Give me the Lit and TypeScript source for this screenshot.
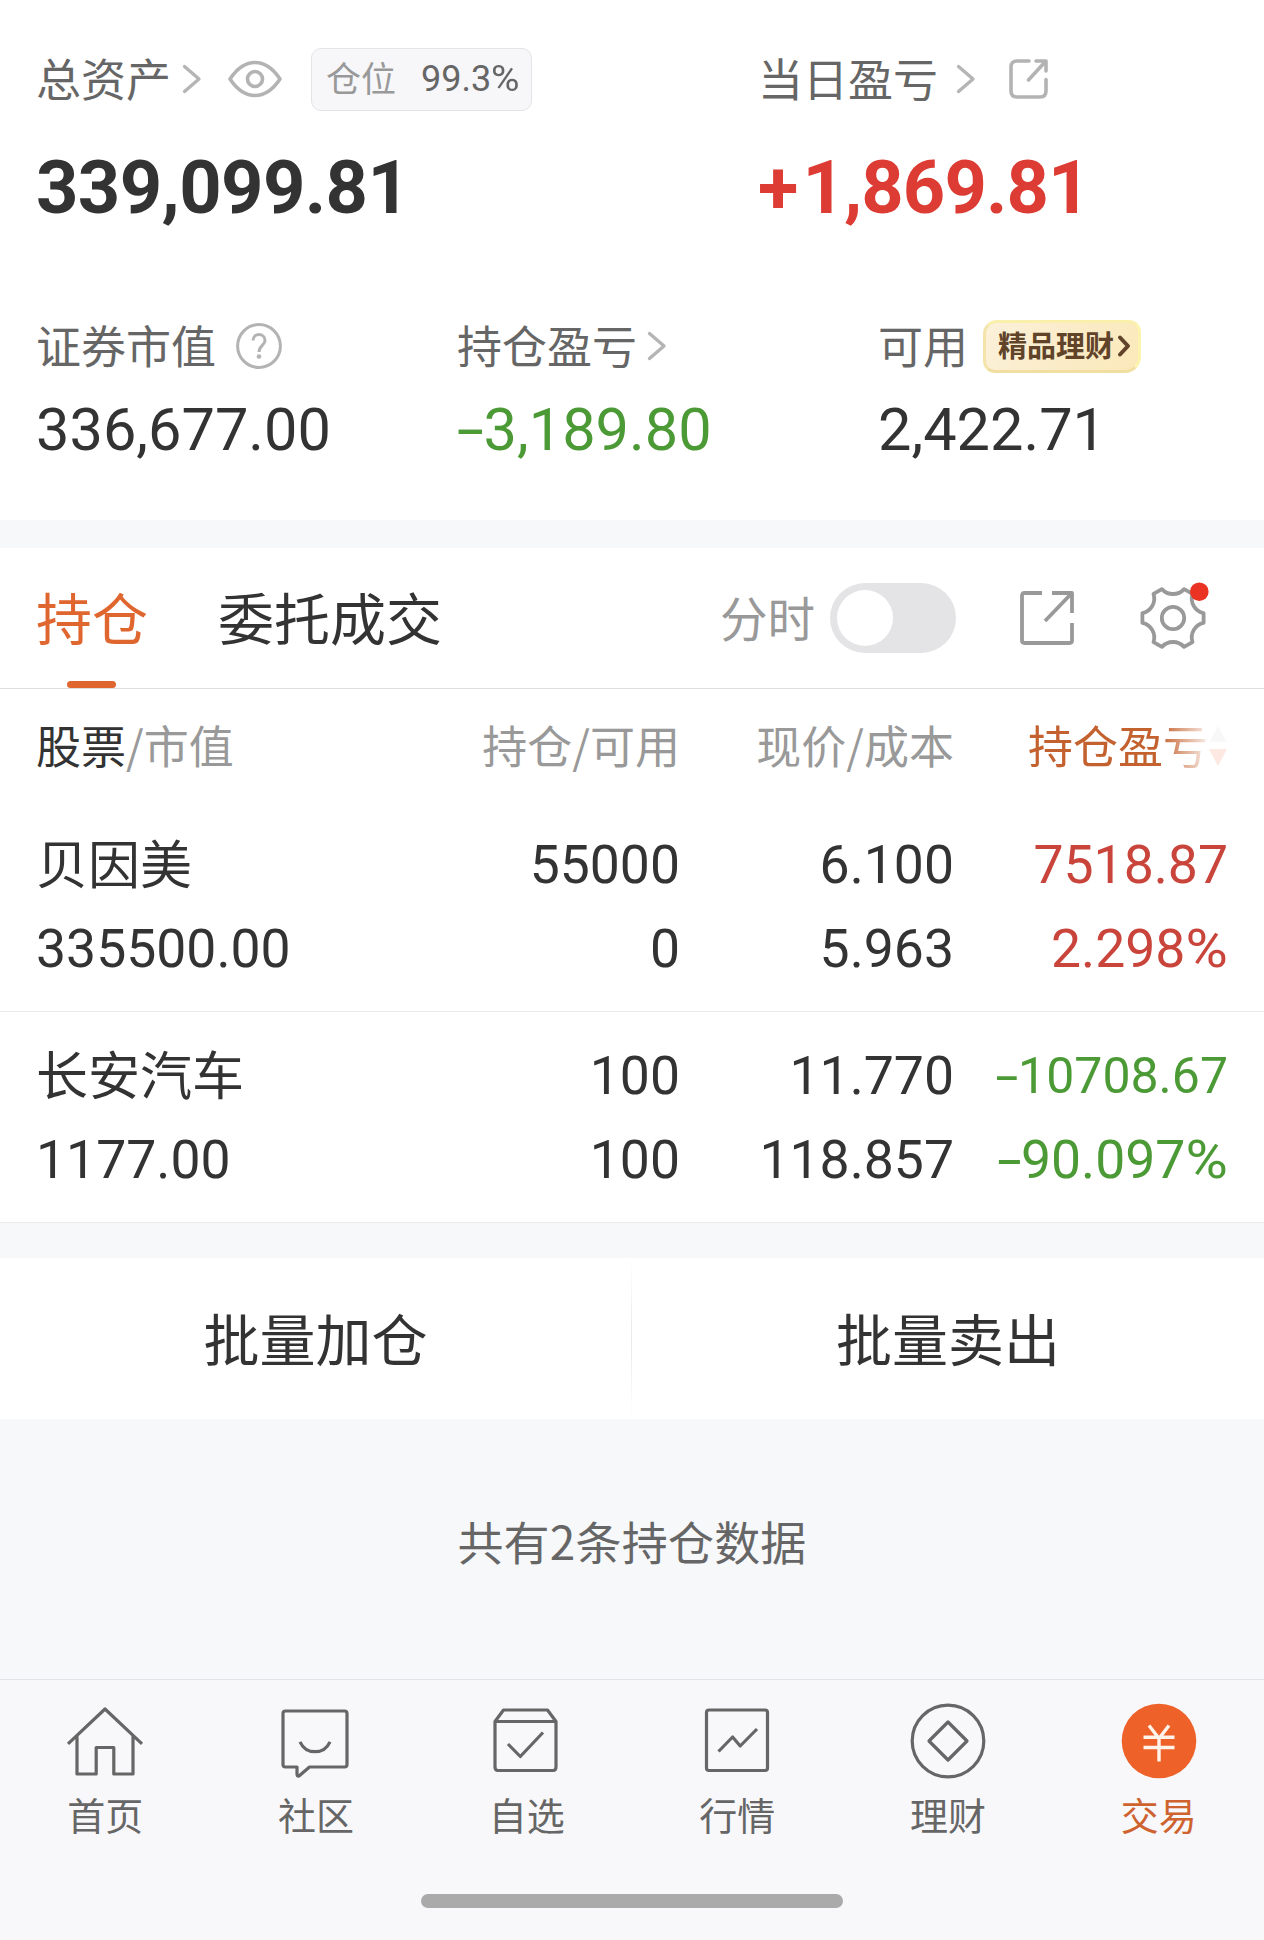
import { LitElement, html, css, svg } from "lit";
import { customElement } from "lit/decorators.js";
import { classMap } from "lit/directives/class-map.js";

interface Holding {
  name: string;
  value: string;
  amount: string;
  available: string;
  price: string;
  cost: string;
  profit: string;
  percent: string;
  up: boolean;
  compact?: boolean;
}

const holdings: Holding[] = [
  { name: "贝因美", value: "335500.00", amount: "55000", available: "0", price: "6.100", cost: "5.963", profit: "7518.87", percent: "2.298%", up: true },
  { name: "长安汽车", value: "1177.00", amount: "100", available: "100", price: "11.770", cost: "118.857", profit: "-10708.67", percent: "-90.097%", up: false, compact: true },
];

const navItems = [
  { label: "首页", icon: svg`<path d="M-37 2.8L0-32L37 2.8M-28-5V33H-8.8V6.5H8.8V33H28V-5"/>` },
  { label: "社区", icon: svg`<path d="M-30.500-30H28.500Q31-30 31-27.500V23.500Q31 26 28.500 26H-6.500L-17 35Q-19 35.500-19 33V26H-30.500Q-33 26-33 23.500V-27.500Q-33-30-30.500-30ZM-16 .8C-10 14 8 14 14 .8"/>` },
  { label: "自选", icon: svg`<path d="M-32-19.500L-23.500-31H20.500L29-19.500V26Q29 29.500 26 29.500H-29Q-32 29.500-32 26ZM-32-19.500H29M-19 3L-6.700 15.500L16-8.500"/>` },
  { label: "行情", icon: svg`<rect x="-30.500" y="-31" width="61" height="60.500" rx="2.500"/><path d="M-18.500 10.500L-4.400-4L3.200 5L20-12"/>` },
  { label: "理财", icon: svg`<circle r="35.800"/><path d="M0-19L19 0L0 19L-19 0Z"/>` },
  { label: "交易", active: true, icon: svg`<circle class="disc" r="37.300"/><path class="yen" d="M-10-15.500L0-2.500L10-15.500M-15.500-3.800H15.500M-15.500 6.500H15.500M0-2.500V20.500"/>` },
];

const chevron = html`<svg class="chevron" width="20" height="30" viewBox="0 0 20 30"><path d="M2.500 2.500L17 15L2.500 27.500"/></svg>`;

/* The minus and percent signs are set wider than the digits' own face draws them. */
function figure(text: string) {
  const minus = text.startsWith("-");
  const percent = text.endsWith("%");
  const body = text.slice(minus ? 1 : 0, percent ? -1 : undefined);
  return html`<span>${minus ? html`<span class="minus">-</span>` : ""}${body}${percent ? html`<span class="percent">%</span>` : ""}</span>`;
}

@customElement("app-root")
export class AppRoot extends LitElement {
  static styles = css`
    :host {
      display: block;
      width: 1264px;
      height: 1940px;
      overflow: hidden;
      background: #f7f8fa;
      color: #333;
      font-family: "Noto Sans CJK SC", sans-serif;
    }
    * { box-sizing: border-box; }
    svg { display: block; fill: none; flex: none; overflow: visible; }
    .cjk { line-height: 1; padding-bottom: 0.06em; white-space: nowrap; }
    .num { font-family: Roboto, "Noto Sans CJK SC", sans-serif; line-height: 1; white-space: nowrap; }
    .minus { display: inline-block; transform: scaleX(1.65); margin: 0 0.085em; }
    .percent { display: inline-block; transform: scaleX(1.08); margin: 0 0.03em 0 0.035em; }
    .up { color: #c9443b; }
    .down { color: #4c9a36; }
    .label { font-size: 45px; color: #666; }
    .chevron { stroke: #b5b5b5; stroke-width: 3.4; stroke-linecap: round; stroke-linejoin: round; }
    .line-icon { stroke: #b3b3b3; stroke-width: 3.6; stroke-linecap: round; stroke-linejoin: round; }

    .summary { height: 520px; background: #fff; }
    .totals { display: grid; grid-template-columns: 722px 1fr; padding-left: 36px; height: 248px; }
    .total { display: flex; flex-direction: column; }
    .total-head { height: 158px; display: flex; align-items: center; }
    .total .chevron { margin-left: 11px; }
    .total:last-child .chevron { margin-left: 18px; }
    .big { height: 60px; display: flex; align-items: center; font-size: 74px; font-weight: 700; letter-spacing: -0.600px; }
    .total .big.up { color: #dc3c33; letter-spacing: -0.900px; }
    .plus { margin-right: 5px; }
    .eye { margin-left: 26px; }
    .share-small { margin-left: 33px; }
    .position {
      display: flex; align-items: center; gap: 25px;
      width: 221px; height: 63px; margin-left: 29px; padding-left: 14px;
      border: 1px solid #e4e4e7; border-radius: 10px; background: #f7f7fa;
    }
    .position .cjk { font-size: 35px; color: #999; padding-bottom: 0.14em; }
    .position .num { font-size: 36px; color: #666; }

    .details { display: grid; grid-template-columns: repeat(3, 421px); padding: 65px 0 0 36px; }
    .detail-head { display: flex; align-items: center; height: 66px; }
    .detail .chevron { margin-left: 10px; }
    .detail-value { display: flex; align-items: center; height: 104px; font-size: 59.500px; }
    .help { margin-left: 20px; stroke: #b3b3b3; stroke-width: 3; }
    .help-dot { fill: #b3b3b3; stroke: none; }
    .promo {
      display: flex; align-items: center; gap: 4px;
      width: 158px; height: 53px; margin-left: 15px; padding-left: 12px;
      border: 3px solid #f8e9a4; border-color: #faf0ac #fbf3ae #f1dfa2 #f4e4aa;
      border-radius: 14px 12px 16px 12px;
      background: linear-gradient(120deg, #fbf1da, #fbecc9 50%, #fbe9b9);
      color: #604328;
    }
    .promo .cjk { font-size: 29px; font-weight: 700; padding-bottom: 0.112em; }
    .promo svg { stroke: #604328; stroke-width: 4; stroke-linecap: round; stroke-linejoin: round; }

    .holdings { margin-top: 28px; background: #fff; }
    .toolbar { display: flex; height: 141px; padding-left: 36px; border-bottom: 1px solid #dedede; }
    .tab { position: relative; display: flex; align-items: center; height: 140px; margin-right: 70px; font-size: 56px; }
    .tab.active { color: #e0662f; }
    .tab.active::after {
      content: ""; position: absolute; left: 31px; bottom: 0;
      width: 49px; height: 7px; border-radius: 4px; background: #e0662f;
    }
    .tools { display: flex; align-items: center; margin-left: auto; padding-right: 59px; height: 140px; color: #999; }
    .tools .cjk { font-size: 47.500px; }
    .switch { width: 126px; height: 70px; margin-left: 15px; padding: 7px; border-radius: 35px; background: #e4e4e6; }
    .knob { width: 56px; height: 56px; border-radius: 50%; background: #fff; }
    .tools svg { stroke: #999; stroke-width: 3.800; stroke-linejoin: round; }
    .share { margin-left: 64px; }
    .gear { margin-left: 67px; }
    .tools .dot { fill: #ea3323; stroke: none; }

    .row { display: grid; grid-template-columns: 380px 264px 274px 274px; padding-left: 36px; }
    .cell { text-align: right; }
    .cell:first-child { text-align: left; }
    .header { height: 112px; padding-top: 2px; align-items: center; font-size: 45px; color: #999; }
    .header .strong { color: #333; }
    .sort { display: flex; align-items: center; justify-content: flex-end; color: #c4622f; }
    .fade {
      display: flex; align-items: center;
      -webkit-mask-image: linear-gradient(90deg, #000 66%, rgba(0, 0, 0, 0.14) 89%);
      mask-image: linear-gradient(90deg, #000 66%, rgba(0, 0, 0, 0.14) 89%);
    }
    .arrow-up { fill: #d0d0d0; }
    .arrow-down { fill: #ee6129; }
    .stock { height: 211px; padding-top: 22px; border-bottom: 1px solid #ebebeb; font-size: 53.500px; }
    .line { display: flex; align-items: center; height: 84px; justify-content: flex-end; }
    .cell:first-child .line { justify-content: flex-start; }
    .line.cjk { font-size: 52px; height: 84px; padding-bottom: 6px; }
    .line.compact { font-size: 50px; }

    .batch { display: grid; grid-template-columns: 631px 1px 1fr; margin-top: 35px; height: 161px; background: #fff; }
    .action { display: flex; align-items: center; justify-content: center; font-size: 56px; }
    .rule { background: linear-gradient(#fff, #e8e8e8 50%, #fff); }
    .count { display: flex; align-items: center; justify-content: center; height: 260px; font-size: 46px; color: #666; }
    .count .cjk { margin-top: -16px; letter-spacing: 0.200px; }

    .nav { height: 261px; background: #f8f8fb; border-top: 1px solid #e2e3e6; }
    .nav-items { display: grid; grid-template-columns: repeat(6, 1fr); height: 214px; }
    .nav-item { display: flex; flex-direction: column; align-items: center; padding-top: 19px; color: #666; }
    .nav-item svg { stroke: #666; stroke-width: 3.200; stroke-linejoin: round; }
    .nav-item .disc { fill: #ee6129; stroke: none; }
    .nav-item .yen { stroke: #fff3ea; stroke-width: 3.400; }
    .nav-item .cjk { font-size: 38px; margin-top: 12px; }
    .nav-item.active { color: #cf6330; }
    .home-bar { width: 422px; height: 14px; margin: 0 auto; border-radius: 7px; background: #aaa; }
  `;

  private renderStock(h: Holding) {
    const tone = { line: true, num: true, up: h.up, down: !h.up };
    return html`
      <div class="row stock">
        <div class="cell"><div class="line cjk">${h.name}</div><div class="line num">${h.value}</div></div>
        <div class="cell"><div class="line num">${h.amount}</div><div class="line num">${h.available}</div></div>
        <div class="cell"><div class="line num">${h.price}</div><div class="line num">${h.cost}</div></div>
        <div class="cell">
          <div class=${classMap({ ...tone, compact: !!h.compact })}>${figure(h.profit)}</div>
          <div class=${classMap(tone)}>${figure(h.percent)}</div>
        </div>
      </div>`;
  }

  render() {
    return html`
      <section class="summary">
        <div class="totals">
          <div class="total">
            <div class="total-head">
              <span class="cjk label">总资产</span>${chevron}
              <svg class="line-icon eye" width="54" height="38" viewBox="0 0 54 38">
                <path d="M2 19Q13 2.500 27 2.500T52 19Q41 35.500 27 35.500T2 19Z" />
                <circle cx="27" cy="19" r="7.500" />
              </svg>
              <div class="position"><span class="cjk">仓位</span><span class="num">${figure("99.3%")}</span></div>
            </div>
            <div class="big num">339,099.81</div>
          </div>
          <div class="total">
            <div class="total-head">
              <span class="cjk label">当日盈亏</span>${chevron}
              <svg class="line-icon share-small" width="40" height="40" viewBox="0 0 40 40">
                <path d="M20 2H8Q2 2 2 8V32Q2 38 8 38H31Q37 38 37 32V20.500M27 2H37V12M36 3L19.500 21" />
              </svg>
            </div>
            <div class="big num up"><span><span class="plus">+</span>1,869.81</span></div>
          </div>
        </div>
        <div class="details">
          <div class="detail">
            <div class="detail-head">
              <span class="cjk label">证券市值</span>
              <svg class="help" width="46" height="46" viewBox="0 0 46 46">
                <circle cx="23" cy="23" r="21.400" />
                <path d="M17 17.500C17 9.500 29 9.500 29 17.500C29 22.500 23 22.500 23 29" />
                <circle class="help-dot" cx="23" cy="33.500" r="2.300" />
              </svg>
            </div>
            <div class="detail-value num">336,677.00</div>
          </div>
          <div class="detail">
            <div class="detail-head"><span class="cjk label">持仓盈亏</span>${chevron}</div>
            <div class="detail-value num down">${figure("-3,189.80")}</div>
          </div>
          <div class="detail">
            <div class="detail-head">
              <span class="cjk label">可用</span>
              <div class="promo">
                <span class="cjk">精品理财</span>
                <svg width="12" height="20" viewBox="0 0 12 20"><path d="M2 1.500L10 10L2 18.500" /></svg>
              </div>
            </div>
            <div class="detail-value num">2,422.71</div>
          </div>
        </div>
      </section>

      <section class="holdings">
        <div class="toolbar">
          <div class="tab active"><span class="cjk">持仓</span></div>
          <div class="tab"><span class="cjk">委托成交</span></div>
          <div class="tools">
            <span class="cjk">分时</span>
            <div class="switch"><div class="knob"></div></div>
            <svg class="share" width="54" height="54" viewBox="0 0 54 54">
              <path d="M22 2H4.500Q2 2 2 4.500V49.500Q2 52 4.500 52H49.500Q52 52 52 49.500V32M32 2H52V22M51 3L25 30" />
            </svg>
            <svg class="gear" width="64" height="64" viewBox="-32 -32 64 64">
              <path d="M30.600 4.800A15 15 0 0 0 19.500 24.100L11.100 28.900A15 15 0 0 0-11.100 28.900L-19.500 24.100A15 15 0 0 0-30.600 4.800V-4.800A15 15 0 0 0-19.500-24.100L-11.100-28.900A15 15 0 0 0 11.100-28.900L19.500-24.100A15 15 0 0 0 30.600-4.800Z" />
              <circle r="11.200" />
              <circle class="dot" cx="26.300" cy="-26.300" r="9.300" />
            </svg>
          </div>
        </div>
        <div class="row header">
          <div class="cell cjk"><span class="strong">股票</span>/市值</div>
          <div class="cell cjk">持仓/可用</div>
          <div class="cell cjk">现价/成本</div>
          <div class="cell sort">
            <div class="fade">
              <span class="cjk">持仓盈亏</span>
              <svg width="20" height="40" viewBox="0 0 20 40">
                <path class="arrow-up" d="M10 0L19 16H1Z" /><path class="arrow-down" d="M1 23H19L10 40Z" />
              </svg>
            </div>
          </div>
        </div>
        ${holdings.map((h) => this.renderStock(h))}
      </section>

      <section class="batch">
        <div class="action"><span class="cjk">批量加仓</span></div>
        <div class="rule"></div>
        <div class="action"><span class="cjk">批量卖出</span></div>
      </section>
      <div class="count"><span class="cjk">共有2条持仓数据</span></div>

      <nav class="nav">
        <div class="nav-items">
          ${navItems.map(
            (n) => html`<div class=${classMap({ "nav-item": true, active: !!n.active })}>
              <svg width="84" height="84" viewBox="-42 -42 84 84">${n.icon}</svg>
              <span class="cjk">${n.label}</span>
            </div>`
          )}
        </div>
        <div class="home-bar"></div>
      </nav>`;
  }
}
